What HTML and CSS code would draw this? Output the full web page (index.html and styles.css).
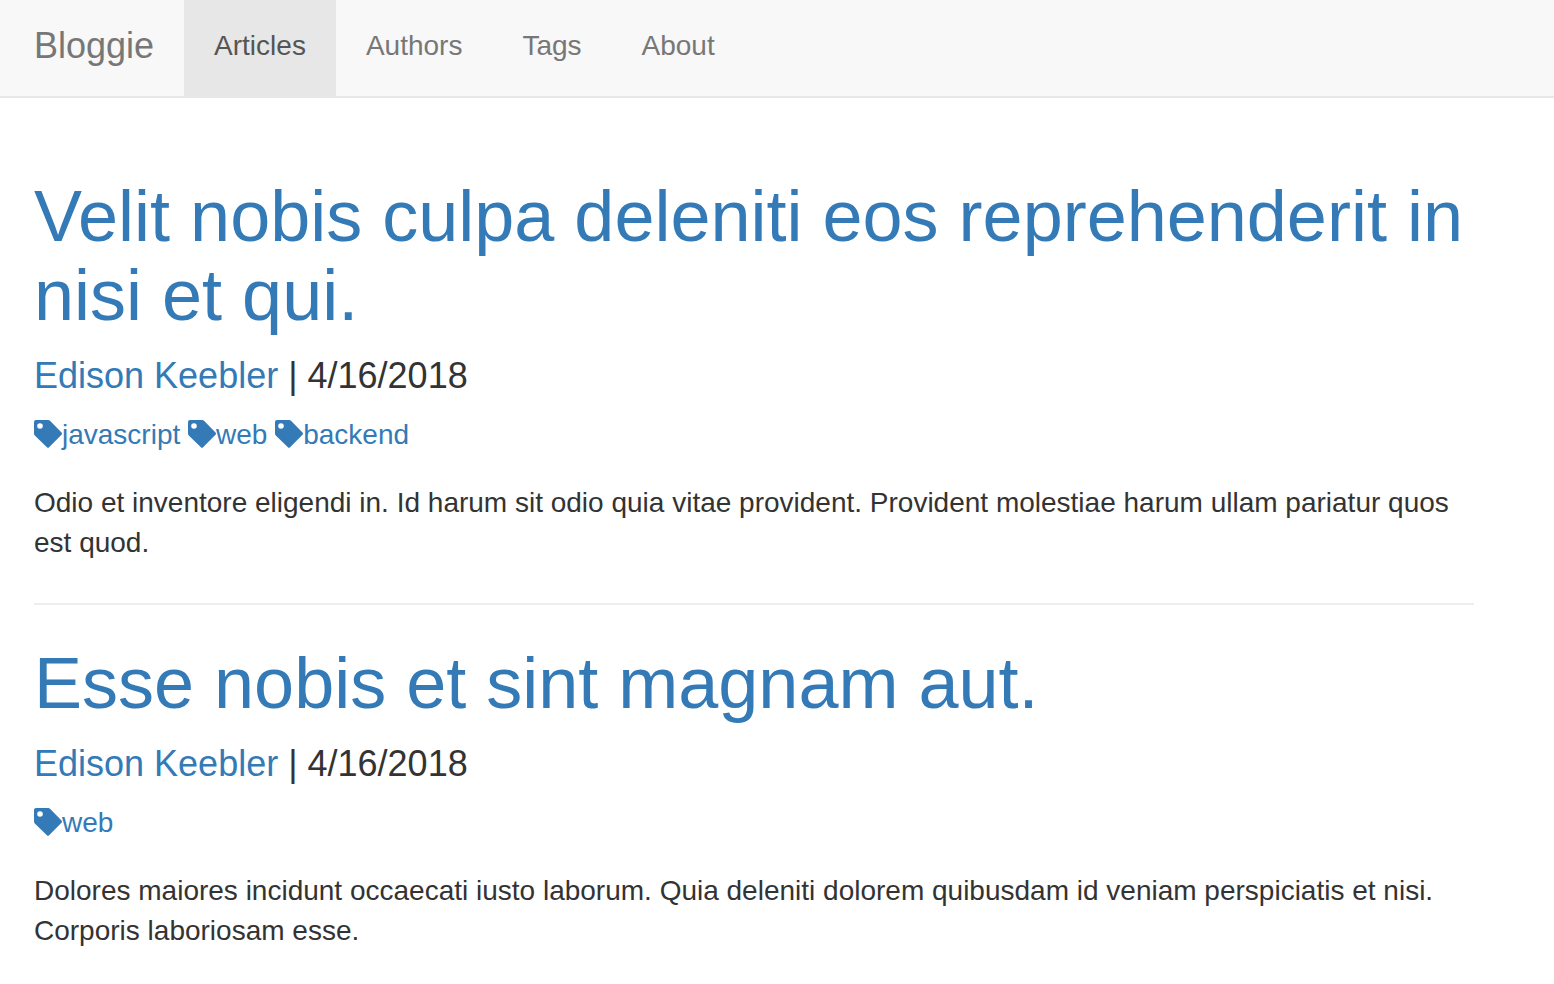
FILE: index.html
```html
<!DOCTYPE html>
<html lang="en">
<head>
<meta charset="utf-8">
<title>Bloggie</title>
<link rel="stylesheet" href="styles.css">
</head>
<body>
<svg class="sprite" aria-hidden="true">
  <symbol id="tag" viewBox="0 0 28 28">
    <path fill-rule="evenodd" d="M2 0H14.200Q15.200 0 16 .8L27.500 12.600Q28.500 13.700 27.500 14.800L15.100 27.300Q14 28.400 12.900 27.300L.8 15.400Q0 14.600 0 13.600V2Q0 0 2 0ZM6 3.200A2.800 2.800 0 1 0 6 8.800A2.800 2.800 0 1 0 6 3.200Z"/>
  </symbol>
</svg>
<nav class="navbar">
  <a class="brand" href="#">Bloggie</a>
  <a class="nav-link active" href="#articles" aria-current="page">Articles</a>
  <a class="nav-link" href="#authors">Authors</a>
  <a class="nav-link" href="#tags">Tags</a>
  <a class="nav-link" href="#about">About</a>
</nav>
<main class="container">
  <article class="post">
    <h1 class="title"><a href="#post-1">Velit nobis culpa deleniti eos reprehenderit in nisi et qui.</a></h1>
    <h4 class="byline"><a href="#author">Edison Keebler</a> | 4/16/2018</h4>
    <div class="tags">
      <a class="tag" href="#javascript"><svg class="icon" aria-hidden="true"><use href="#tag"/></svg>javascript</a>
      <a class="tag" href="#web"><svg class="icon" aria-hidden="true"><use href="#tag"/></svg>web</a>
      <a class="tag" href="#backend"><svg class="icon" aria-hidden="true"><use href="#tag"/></svg>backend</a>
    </div>
    <p class="summary">Odio et inventore eligendi in. Id harum sit odio quia vitae provident. Provident molestiae harum ullam pariatur quos est quod.</p>
  </article>
  <hr class="divider">
  <article class="post">
    <h1 class="title"><a href="#post-2">Esse nobis et sint magnam aut.</a></h1>
    <h4 class="byline"><a href="#author">Edison Keebler</a> | 4/16/2018</h4>
    <div class="tags">
      <a class="tag" href="#web"><svg class="icon" aria-hidden="true"><use href="#tag"/></svg>web</a>
    </div>
    <p class="summary">Dolores maiores incidunt occaecati iusto laborum. Quia deleniti dolorem quibusdam id veniam perspiciatis et nisi. Corporis laboriosam esse.</p>
  </article>
</main>
</body>
</html>
```
FILE: styles.css
```css
* { box-sizing: border-box; }
body {
  margin: 0;
  background: #fff;
  color: #333;
  font-family: "Liberation Sans", Arial, sans-serif;
  font-size: 28px;
  line-height: 40px;
}
a { color: #337ab7; text-decoration: none; }
.sprite { display: none; }
.navbar {
  display: flex;
  padding-left: 4px;
  background: #f8f8f8;
  border-bottom: 2px solid #e7e7e7;
}
.brand, .nav-link {
  padding: 26px 30px 30px;
  color: #777;
}
.brand { font-size: 36px; }
.nav-link.active { background: #e7e7e7; color: #555; }
.container { padding: 79px 80px 0 34px; }
.title, .byline { font-weight: 500; }
.title { margin: 0; font-size: 72px; line-height: 79px; }
.byline { margin: 21px 0 19px; font-size: 36px; line-height: 40px; }
.icon { width: 28px; height: 28px; vertical-align: -4px; fill: currentColor; }
.summary { margin: 28px 0 20px; }
.divider { margin: 40px 0 39px; border: 0; border-top: 2px solid #eee; }
```
